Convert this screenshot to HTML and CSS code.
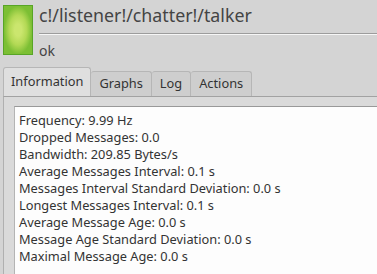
FILE: index.html
```html
<!DOCTYPE html>
<html lang="en">
<head>
  <meta charset="UTF-8">
  <title>talker</title>
  <link rel="stylesheet" href="styles.css">
</head>
<body>
  <div class="header">
    <div class="light"></div>
    <div class="names">
      <div class="title">c!/listener!/chatter!/talker</div>
      <div class="sep"></div>
      <div class="status">ok</div>
    </div>
  </div>

  <div class="tabs">
    <div class="tabbar">
      <div class="tab active">Information</div>
      <div class="tab">Graphs</div>
      <div class="tab">Log</div>
      <div class="tab">Actions</div>
    </div>
    <div class="pane">
      <div class="info">
        <div>Frequency: 9.99 Hz</div>
        <div>Dropped Messages: 0.0</div>
        <div>Bandwidth: 209.85 Bytes/s</div>
        <div>Average Messages Interval: 0.1 s</div>
        <div>Messages Interval Standard Deviation: 0.0 s</div>
        <div>Longest Messages Interval: 0.1 s</div>
        <div>Average Message Age: 0.0 s</div>
        <div>Message Age Standard Deviation: 0.0 s</div>
        <div>Maximal Message Age: 0.0 s</div>
      </div>
    </div>
  </div>
</body>
</html>
```

FILE: styles.css
```css
html, body { height: 100%; }
body { margin: 0; background: #d4d4d4; font-family: "Noto Sans", "Open Sans", sans-serif; color: #333; display: flex; flex-direction: column; overflow: hidden; }
.header { display: flex; padding: 5px 0 0 3px; }
.light { width: 28px; height: 48px; border: 1px solid #58a526; background: radial-gradient(ellipse closest-side, #cbe66e 25%, #b3d955 62%, #7cbf34 100%); background-color: #72ba2e; }
.names { flex: 1; margin-left: 6px; }
.title { font-size: 17.8px; line-height: 20px; color: #444; }
.sep { height: 1px; background: #9c9c9c; border-bottom: 1px solid #f6f6f6; margin-top: 8px; }
.status { font-size: 14px; line-height: 20px; margin-top: 6px; color: #444; }
.tabs { flex: 1; display: flex; flex-direction: column; margin: 6px 0 0 3px; min-height: 0; }
.tabbar { display: flex; align-items: flex-end; height: 29px; }
.tab { font-size: 12.8px; height: 24px; line-height: 22px; padding: 0 8px; background: #cecece; border: 1px solid #b6b6b6; border-bottom: none; border-left: none; border-radius: 3px 3px 0 0; color: #333; }
.tab.active { height: 28px; line-height: 27px; background: #dfdfdf; border-left: 1px solid #b6b6b6; padding: 0 7px; }
.pane { flex: 1; display: flex; background: #dadada; border-top: 1px solid #a2a2a2; border-left: 1px solid #b0b0b0; padding: 9px 0 0 10px; min-height: 0; }
.info { flex: 1; background: #fdfdfd; border-top: 1px solid #999; border-left: 1px solid #b4b4b4; padding: 5px 0 0 4px; font-size: 12.8px; line-height: 17px; }
```
